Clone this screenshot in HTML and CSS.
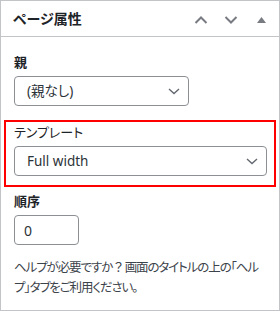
FILE: index.html
```html
<!DOCTYPE html>
<html lang="ja">
<head>
  <meta charset="UTF-8">
  <meta name="viewport" content="width=device-width, initial-scale=1.0">
  <title>ページ属性</title>
  <link rel="stylesheet" href="styles.css">
</head>
<body>
  <div class="postbox">
    <div class="postbox-header">
      <h2>ページ属性</h2>
      <div class="handle-actions">
        <button class="handle" aria-label="上へ移動">
          <svg width="14" height="8" viewBox="0 0 14 8"><path d="M1.5 7 L7 1.5 L12.5 7" fill="none" stroke="currentColor" stroke-width="2"/></svg>
        </button>
        <button class="handle" aria-label="下へ移動">
          <svg width="14" height="8" viewBox="0 0 14 8"><path d="M1.5 1 L7 6.5 L12.5 1" fill="none" stroke="currentColor" stroke-width="2"/></svg>
        </button>
        <button class="handle" aria-label="パネルを切り替え">
          <svg width="9" height="6" viewBox="0 0 9 6"><path d="M0 6 L4.5 0 L9 6 Z" fill="currentColor"/></svg>
        </button>
      </div>
    </div>

    <div class="inside">
      <p class="field-label strong">親</p>
      <select class="parent-select">
        <option>(親なし)</option>
      </select>

      <div class="field highlight">
        <p class="field-label">テンプレート</p>
        <select class="template-select">
          <option>Full width</option>
        </select>
      </div>

      <div class="field">
        <p class="field-label strong">順序</p>
        <input type="text" class="order-input" value="0">
      </div>

      <p class="help">ヘルプが必要ですか<span class="wide">？</span>画面のタイトルの上の「ヘル<br>プ」タブをご利用ください。</p>
    </div>
  </div>
</body>
</html>
```

FILE: styles.css
```css
body {
  margin: 0;
  font-family: "Noto Sans", "Noto Sans CJK JP", sans-serif;
  font-feature-settings: "palt";
  color: #1d2327;
  background-color: #fff;
}
.postbox {
  width: 280px;
  height: 311px;
  box-sizing: border-box;
  border: 1px solid #c3c4c7;
  background-color: #fff;
}
.postbox-header {
  display: flex;
  align-items: center;
  height: 35px;
  border-bottom: 1px solid #c3c4c7;
}
.postbox-header h2 {
  flex: 1;
  margin: 0;
  padding-left: 12px;
  font-size: 14px;
  font-weight: bold;
  line-height: 20px;
}
.handle-actions {
  display: flex;
  padding-right: 3px;
  padding-top: 3px;
}
.handle {
  width: 30px;
  height: 30px;
  padding: 0;
  border: none;
  background: none;
  color: #787c82;
  display: flex;
  align-items: center;
  justify-content: center;
}
.inside {
  padding: 15px 12px 12px 13px;
}
.field {
  margin-top: 16px;
}
.field-label {
  margin: 0 0 4px;
  font-size: 13px;
  line-height: 20px;
}
.strong {
  font-weight: bold;
}
select {
  display: block;
  appearance: none;
  height: 30px;
  box-sizing: border-box;
  padding: 0 24px 0 12px;
  border: 1px solid #8c8f94;
  border-radius: 4px;
  background: #fff url("data:image/svg+xml;utf8,<svg xmlns='http://www.w3.org/2000/svg' width='12' height='7' viewBox='0 0 12 7'><path d='M1 1 L6 5.5 L11 1' fill='none' stroke='%23646970' stroke-width='1.4'/></svg>") no-repeat right 8px center;
  font-family: "Noto Sans", "Noto Sans CJK JP", sans-serif;
  font-feature-settings: "palt";
  font-size: 13.5px;
  color: #2c3338;
}
.parent-select {
  width: 175px;
}
.template-select {
  width: 100%;
}
.highlight {
  position: relative;
  margin-top: 16px;
}
.highlight::after {
  content: "";
  position: absolute;
  top: -2px;
  left: -10px;
  right: -9px;
  bottom: -11px;
  border: 2px solid #ff0000;
}
.field + .field {
  margin-top: 15px;
}
.order-input {
  display: block;
  width: 65px;
  height: 30px;
  box-sizing: border-box;
  padding: 0 9px;
  border: 1px solid #8c8f94;
  border-radius: 4px;
  font-family: "Noto Sans", sans-serif;
  font-size: 14px;
  color: #2c3338;
}
.help {
  margin: 13px 0 0;
  font-size: 12.5px;
  letter-spacing: -1.1px;
  line-height: 20px;
  color: #3c434a;
  white-space: nowrap;
}
.help .wide {
  font-feature-settings: normal;
  letter-spacing: 0;
}
```
